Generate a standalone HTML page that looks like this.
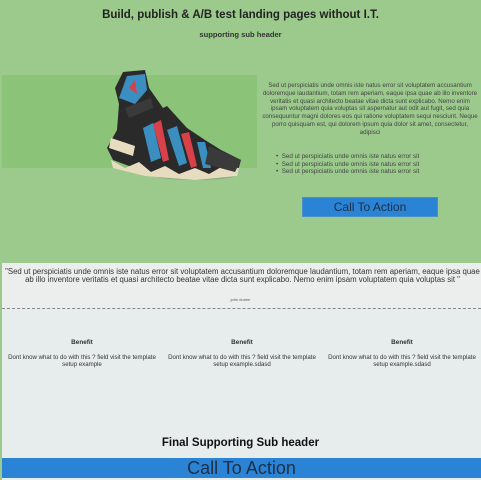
<!DOCTYPE html>
<html><head><style>
*{margin:0;padding:0;box-sizing:border-box}
body{width:481px;height:480px;background:#9bca8c;font-family:"Liberation Sans",Arial,sans-serif;color:#222;position:relative;overflow:hidden}
.a{position:absolute}
h1{position:absolute;top:9px;left:0;width:481px;text-align:center;font-size:11.5px;font-weight:bold;color:#222}
.sub{top:30px;left:0;width:481px;text-align:center;font-size:7.6px;font-weight:bold;color:#333}
.para{left:262px;top:82px;width:216px;font-size:6.2px;line-height:7.8px;text-align:center;color:#444}
.ul{left:276px;top:153px;font-size:6.3px;line-height:7.6px;color:#444}
.btn{left:302px;top:197px;width:136px;height:20px;background:#2a83d4;border:1px solid #4a8fc8;font-size:12px;color:#1d2f44;text-align:center;line-height:19px}
.low{left:2px;top:263px;width:479px;height:217px;background:#e7ecec}
.quote{left:2px;top:263px;width:479px;height:45px;background:#eceeee}
.q{left:2px;top:268px;width:481px;font-size:7.8px;line-height:8px;text-align:center;color:#333;white-space:nowrap;overflow:hidden}
.dash{left:2px;top:308px;width:479px;border-top:1px dashed #888}
.ben{top:339px;width:160px;text-align:center;font-size:6.1px;line-height:7.5px;color:#333;white-space:nowrap}
.ben b{display:block;font-size:6.4px;margin-bottom:7px}
.fin{left:0;top:437px;width:481px;text-align:center;font-size:11.5px;font-weight:bold;color:#111}
.cta{left:2px;top:458px;width:479px;height:20px;background:#2a83d4;text-align:center;font-size:18px;line-height:21px;color:#1d2f44}
</style></head><body>
<h1>Build, publish &amp; A/B test landing pages without I.T.</h1>
<div class="a sub">supporting sub header</div>
<div class="a" style="left:2px;top:75px;width:255px;height:93px;background:#8bc379"></div>
<svg class="a" style="left:105px;top:68px" width="140" height="115" viewBox="0 0 140 115">
<ellipse cx="90" cy="108" rx="40" ry="4" fill="#7a9a70" opacity=".5"/>
<path d="M12 62 L14 36 L10 20 L18 4 L40 2 L44 20 L58 40 L62 38 L82 60 L100 72 L116 82 L136 92 L132 106 L90 108 L40 104 L8 92 L2 80 Z" fill="#2a2a2a"/>
<path d="M14 30 L22 8 L40 6 L42 22 L30 36 Z" fill="#3b8fc0"/>
<path d="M20 40 L46 30 L48 40 L24 50 Z" fill="#3a3a3a"/>
<path d="M38 60 L48 55 L56 90 L46 94 Z" fill="#3b8fc0"/>
<path d="M48 56 L56 52 L64 92 L58 94 Z" fill="#d8414a"/>
<path d="M62 62 L72 58 L82 95 L74 98 Z" fill="#3b8fc0"/>
<path d="M76 66 L84 64 L92 98 L86 100 Z" fill="#d8414a"/>
<path d="M92 74 L100 74 L106 100 L98 100 Z" fill="#3b8fc0"/>
<path d="M24 20 L30 12 L32 26 Z" fill="#d8414a"/>
<path d="M6 70 L30 78 L28 88 L4 80 Z" fill="#e8dcc0"/>
<path d="M6 92 L20 100 L34 94 L46 104 L60 98 L74 106 L90 100 L104 106 L118 98 L134 100 L132 108 L90 112 L40 108 L8 100 Z" fill="#e8dcc0"/>
<path d="M104 78 L136 92 L130 104 L100 96 Z" fill="#3a3a3a"/>
</svg>
<div class="a para">Sed ut perspiciatis unde omnis iste natus error sit voluptatem accusantium doloremque laudantium, totam rem aperiam, eaque ipsa quae ab illo inventore veritatis et quasi architecto beatae vitae dicta sunt explicabo. Nemo enim ipsam voluptatem quia voluptas sit aspernatur aut odit aut fugit, sed quia consequuntur magni dolores eos qui ratione voluptatem sequi nesciunt. Neque porro quisquam est, qui dolorem ipsum quia dolor sit amet, consectetur, adipisci</div>
<div class="a ul">• &nbsp;Sed ut perspiciatis unde omnis iste natus error sit<br>• &nbsp;Sed ut perspiciatis unde omnis iste natus error sit<br>• &nbsp;Sed ut perspiciatis unde omnis iste natus error sit</div>
<div class="a btn">Call To Action</div>
<div class="a low"></div>
<div class="a quote"></div>
<div class="a q">"Sed ut perspiciatis unde omnis iste natus error sit voluptatem accusantium doloremque laudantium, totam rem aperiam, eaque ipsa quae<br>ab illo inventore veritatis et quasi architecto beatae vitae dicta sunt explicabo. Nemo enim ipsam voluptatem quia voluptas sit "</div>
<div class="a" style="left:0;top:297px;width:481px;text-align:center;font-size:4px;color:#555">john dumm</div>
<div class="a dash"></div>
<div class="a ben" style="left:2px"><b>Benefit</b>Dont know what to do with this ? field visit the template<br>setup example</div>
<div class="a ben" style="left:162px"><b>Benefit</b>Dont know what to do with this ? field visit the template<br>setup example.sdasd</div>
<div class="a ben" style="left:322px"><b>Benefit</b>Dont know what to do with this ? field visit the template<br>setup example.sdasd</div>
<div class="a fin">Final Supporting Sub header</div>
<div class="a cta">Call To Action</div>
</body></html>
